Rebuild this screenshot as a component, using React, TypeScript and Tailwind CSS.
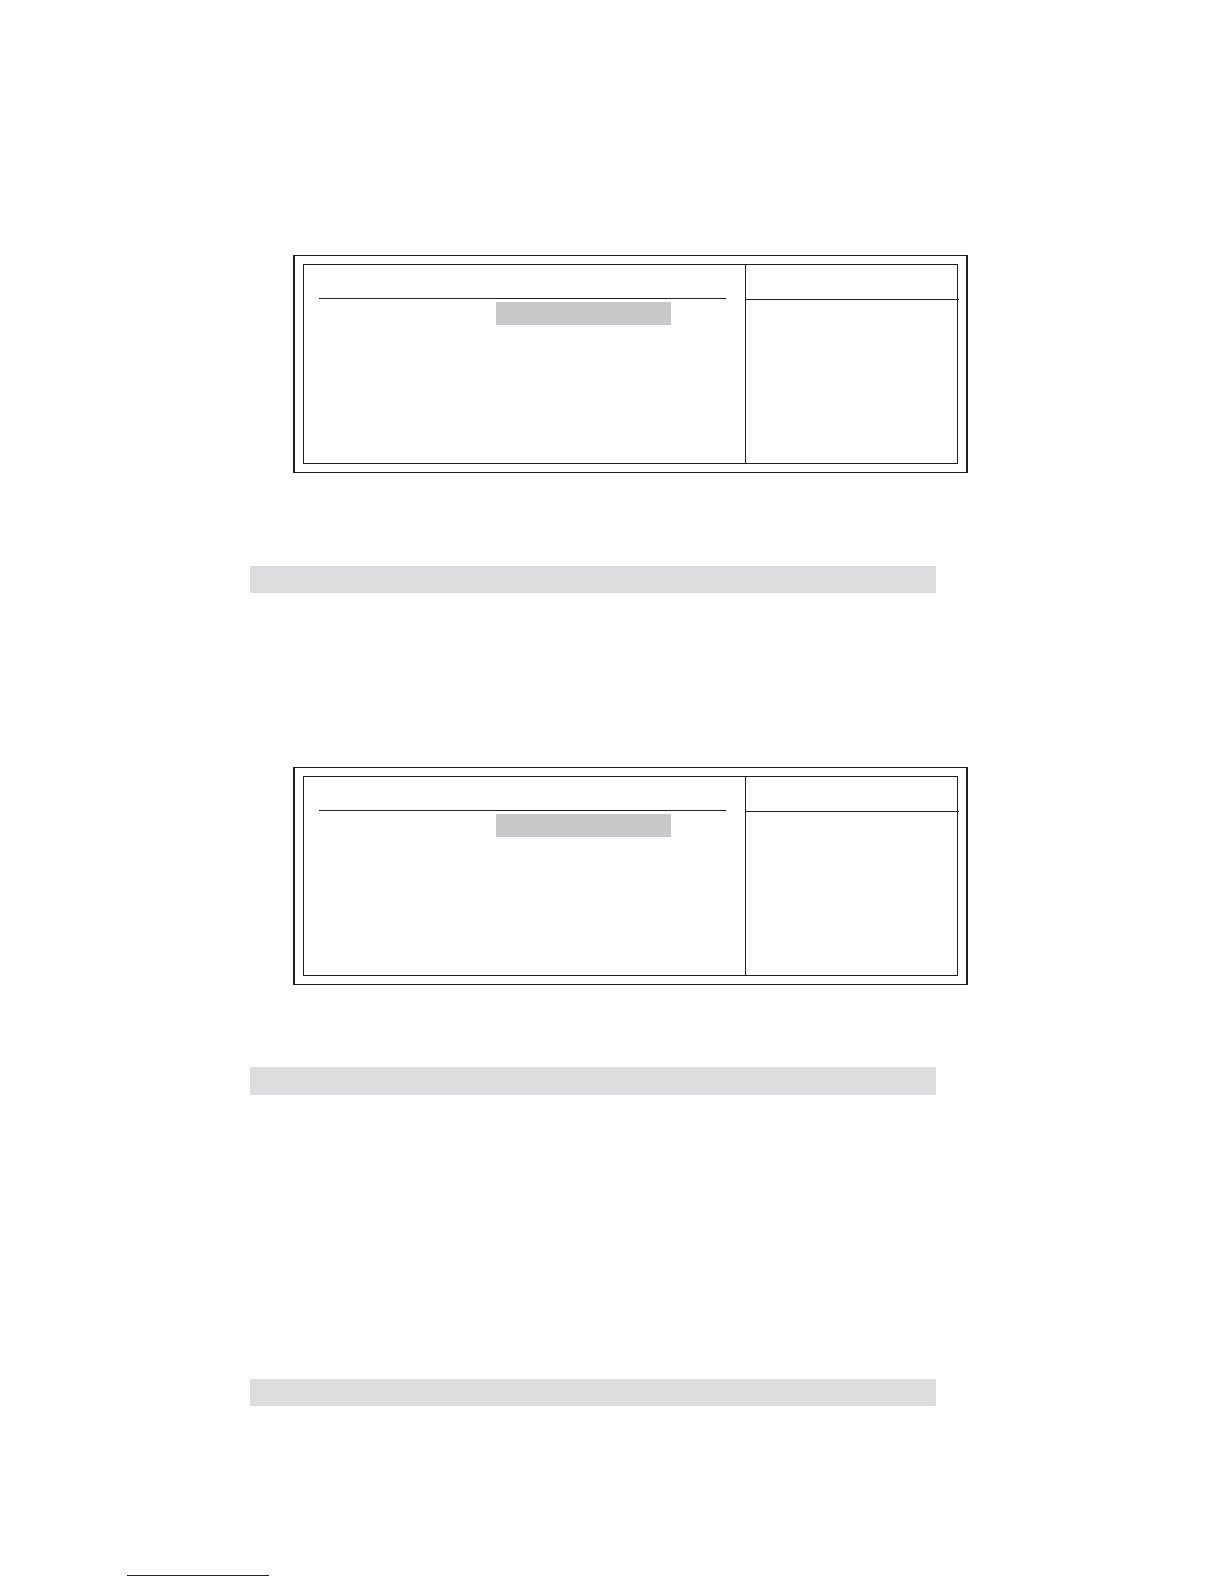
interface SectionBarProps {
    className: string;
}

const SectionBar = ({ className }: SectionBarProps) => {
    return <div className={`mr-8 bg-[#dcddde] ${className}`} />;
};

const SetupPanel = () => {
    return (
        <section className="ml-[43px] border-x-2 border-y border-[#231f20] p-2">
            <div className="grid h-[200px] grid-cols-[1fr_211px] border border-[#231f20]">
                <div className="border-r border-[#231f20] pl-[15px] pr-[19px]">
                    <div className="h-[34px] border-b border-[#231f20]" />
                    <div className="ml-[177px] mt-[3px] h-[23px] w-[175px] bg-[#c7c8ca]" />
                </div>
                <div>
                    {/* the rule runs slightly past the frame */}
                    <div className="-mr-0.5 h-[35px] border-b border-[#231f20]" />
                </div>
            </div>
        </section>
    );
};

export default function App() {
    return (
        <div className="min-h-screen bg-white font-['Liberation_Sans',sans-serif]">
            <main className="pl-[250px] pr-[256px] pt-[255px]">
                <SetupPanel />
                <SectionBar className="mt-[93px] mb-[174px] h-[27px]" />
                <SetupPanel />
                <SectionBar className="mt-[82px] h-7" />
                <SectionBar className="mt-[284px] h-[27px]" />
            </main>
            <footer className="pl-[127px] pt-[169px]">
                <a href="#" aria-label="Back to contents" className="block h-px w-[142px] bg-[#1a1a8c]" />
            </footer>
        </div>
    );
}
